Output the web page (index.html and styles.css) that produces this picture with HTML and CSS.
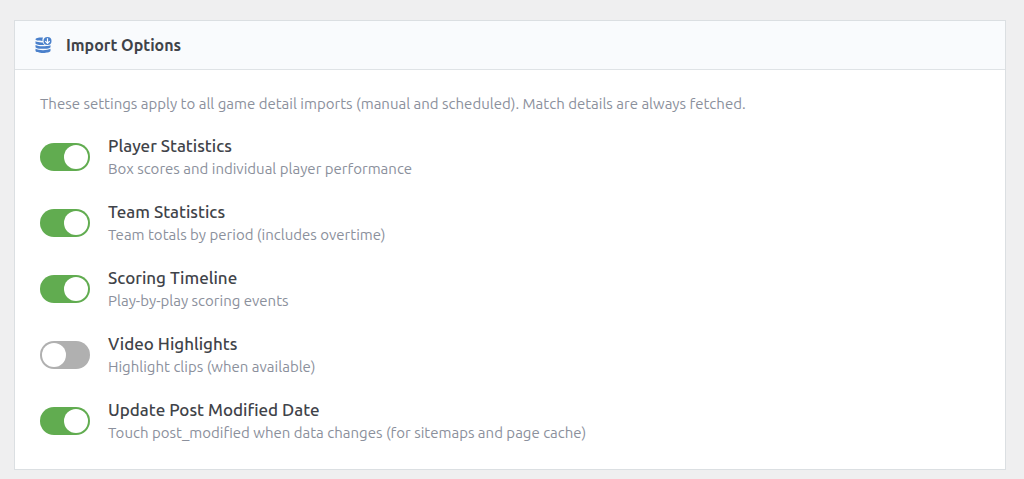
FILE: index.html
```html
<!DOCTYPE html>
<html lang="en">
<head>
 <meta charset="utf-8">
 <meta name="viewport" content="width=device-width, initial-scale=1.0">
 <title>Import Options</title>
 <link rel="stylesheet" href="styles.css">
</head>
<body>
<section class="panel">
 <header class="panel-header">
  <svg class="panel-icon" viewBox="0 0 16 16" aria-hidden="true">
   <path d="M0 2.300C0 .8 3 .3 7.500.4A5 5 0 0 0 7 3.900C3 3.900 0 3.500 0 2.300z"/>
   <path d="M0 4.300c1.500.9 4.500 1.200 7.300 1.100A5 5 0 0 0 9.200 7.900C5 8.300 0 7.900 0 6.300z"/>
   <path d="M0 8c3 1.600 8 1.600 11 .9 1.500.2 2.800 0 4-.7v1.700c0 2.600-15 2.600-15 0z"/>
   <path d="M0 11.800c3 1.800 12 1.800 15 0v2c0 2.900-15 2.900-15 0z"/>
   <circle cx="12" cy="4" r="4"/>
   <path class="panel-icon-arrow" d="M12 1.200v5M9.800 4.200l2.200 2.200 2.200-2.200"/>
  </svg>
  <h2 class="panel-title">Import Options</h2>
 </header>
 <form class="panel-body">
  <p class="intro">These settings apply to all game detail imports (manual and scheduled). Match details are always fetched.</p>
  <div class="options">
   <div class="option">
    <input class="toggle" type="checkbox" id="player_stats" aria-describedby="player_stats_desc" checked>
    <div class="option-text">
     <label class="option-name" for="player_stats">Player Statistics</label>
     <p class="option-desc" id="player_stats_desc">Box scores and individual player performance</p>
    </div>
   </div>
   <div class="option">
    <input class="toggle" type="checkbox" id="team_stats" aria-describedby="team_stats_desc" checked>
    <div class="option-text">
     <label class="option-name" for="team_stats">Team Statistics</label>
     <p class="option-desc" id="team_stats_desc">Team totals by period (includes overtime)</p>
    </div>
   </div>
   <div class="option">
    <input class="toggle" type="checkbox" id="timeline" aria-describedby="timeline_desc" checked>
    <div class="option-text">
     <label class="option-name" for="timeline">Scoring Timeline</label>
     <p class="option-desc" id="timeline_desc">Play-by-play scoring events</p>
    </div>
   </div>
   <div class="option">
    <input class="toggle" type="checkbox" id="video" aria-describedby="video_desc">
    <div class="option-text">
     <label class="option-name" for="video">Video Highlights</label>
     <p class="option-desc" id="video_desc">Highlight clips (when available)</p>
    </div>
   </div>
   <div class="option">
    <input class="toggle" type="checkbox" id="post_modified" aria-describedby="post_modified_desc" checked>
    <div class="option-text">
     <label class="option-name" for="post_modified">Update Post Modified Date</label>
     <p class="option-desc" id="post_modified_desc">Touch post_modified when data changes (for sitemaps and page cache)</p>
    </div>
   </div>
  </div>
 </form>
</section>
</body>
</html>
```

FILE: styles.css
```css
body {
 margin:0;
 padding:20px 18px 9px 14px;
 background:#efeff0;
 color:#3f4349;
 font-family:Ubuntu, "Noto Sans", sans-serif;
}
.panel {
 background:#ffffff;
 border:1px solid #dbdfe2;
}
.panel-header {
 display:flex;
 align-items:center;
 gap:14px;
 padding:12px 20px;
 background:#f9fbfd;
 border-bottom:1px solid #dfe3e6;
}
.panel-icon {
 width:17px;
 height:16px;
 fill:#4a80cb;
}
.panel-icon-arrow {
 fill:none;
 stroke:#ffffff;
 stroke-width:1.2;
}
.panel-title {
 margin:0;
 font-size:16px;
 line-height:24px;
 font-weight:600;
}
.panel-body {
 padding:22px 25px 25px;
}
.intro {
 margin:0 0 18px;
 color:#8b909c;
 font-size:15px;
 line-height:24px;
}
.options {
 display:flex;
 flex-direction:column;
 gap:20px;
}
.option {
 display:flex;
 align-items:center;
 gap:18px;
}
.option-name {
 display:block;
 font-size:17px;
 line-height:24px;
 font-weight:500;
}
.option-desc {
 margin:0;
 color:#8b909c;
 font-size:15px;
 line-height:22px;
}

/* Toggle switch */
.toggle {
 -webkit-appearance:none;
 appearance:none;
 display:flex;
 flex:none;
 box-sizing:border-box;
 width:50px;
 height:28px;
 margin:0;
 padding:2px;
 border-radius:14px;
 background:#b0b0b0;
 cursor:pointer;
}
.toggle::before {
 content:"";
 width:24px;
 height:24px;
 border-radius:50%;
 background:#ffffff;
}
.toggle:checked {
 justify-content:flex-end;
 background:#61ac50;
}
```
